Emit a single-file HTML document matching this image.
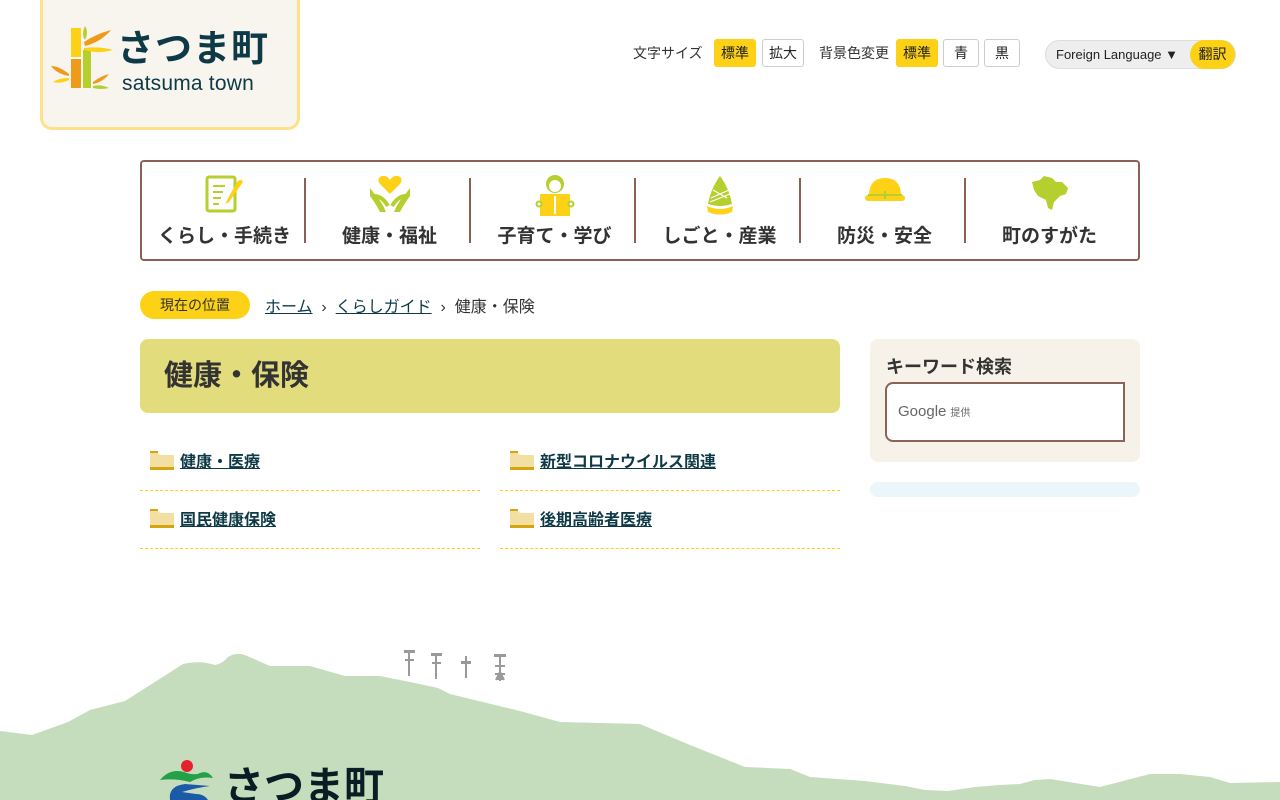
<!DOCTYPE html>
<html lang="ja"><head><meta charset="utf-8">
<style>
*{box-sizing:border-box;margin:0;padding:0}
html,body{width:1280px;height:800px;overflow:hidden;background:#fff;font-family:"Liberation Sans","Noto Sans CJK JP",sans-serif;color:#333}
.logo{position:absolute;left:40px;top:-10px;width:260px;height:140px;background:#f8f4ee;border:3px solid #fde28a;border-top:none;border-radius:0 0 12px 12px}
.logo .t1{position:absolute;left:74px;top:40px;font-size:37px;font-weight:bold;color:#0e3a48;letter-spacing:1px;line-height:1}
.logo .t2{position:absolute;left:79px;top:83px;font-size:21px;color:#0e3a48;line-height:1;letter-spacing:.2px}
.tools{position:absolute;top:39px;font-size:14px;color:#333;line-height:28px}
.btn{position:absolute;top:39px;height:28px;border:1px solid #ccc;border-radius:3px;font-size:14px;line-height:26px;text-align:center;background:#fff;color:#222}
.btn.on{background:#fcd116;border-color:#fcd116}
.lang{position:absolute;left:1045px;top:40px;width:191px;height:29px;border:1px solid #ddd;border-radius:15px;background:#eee;font-size:13px;line-height:27px;padding-left:10px;color:#222}
.lang b{position:absolute;right:0;top:-1px;width:45px;height:29px;border-radius:15px;background:#fcd116;font-weight:normal;font-size:14px;text-align:center;line-height:29px}
.nav{position:absolute;left:140px;top:160px;width:1000px;height:101px;border:2px solid #8b5e57;border-radius:4px}
.nav .it{position:absolute;top:0;width:165px;height:97px;text-align:center}
.nav .it span{position:absolute;left:0;right:0;top:59px;font-size:19px;font-weight:bold;color:#333}
.nav .sep{position:absolute;top:16px;width:2px;height:65px;background:#8b5e57}
.nav svg{position:absolute;left:50%;top:12px;transform:translateX(-50%)}
.crumb{position:absolute;top:291px;left:140px;height:28px}
.crumb .pill{position:absolute;left:0;top:0;width:110px;height:28px;border-radius:14px;background:#fcd116;font-size:14px;line-height:28px;text-align:center;color:#333}
.crumb .c{position:absolute;top:2px;font-size:16px;white-space:nowrap;color:#333}
.crumb a{color:#0e3a48;text-decoration:underline}
.h1{position:absolute;left:140px;top:339px;width:700px;height:74px;background:#e3dc7d;border-radius:8px;font-size:29px;font-weight:bold;line-height:74px;padding-left:24px;color:#333}
.li{position:absolute;width:340px;height:58px;border-bottom:1px dashed #fcd116}
.li svg{position:absolute;left:10px;top:18px}
.li a{position:absolute;left:40px;top:15px;font-size:16px;font-weight:bold;color:#0e3a48;text-decoration:underline}
.side{position:absolute;left:870px;top:339px;width:270px;height:123px;background:#f6f1e9;border-radius:8px}
.side h2{position:absolute;left:16px;top:14px;font-size:18px;font-weight:bold;color:#333}
.side .box{position:absolute;left:15px;top:43px;width:240px;height:60px;background:#fff;border:2px solid #8b6457;border-radius:8px 0 0 8px}
.side .g{position:absolute;left:11px;top:19px;font-size:15px;color:#666}
.side .g small{font-size:10px;margin-left:4px}
.blue{position:absolute;left:870px;top:482px;width:270px;height:15px;background:#ebf6fa;border-radius:8px}
</style></head><body>

<div class="logo">
 <svg style="position:absolute;left:8px;top:36px" width="62" height="64" viewBox="0 0 62 64">
  <rect x="20" y="2" width="10" height="30" fill="#fcd116"/>
  <rect x="20" y="32" width="10" height="30" fill="#ee9b1c"/>
  <rect x="32" y="24" width="8" height="38" fill="#b5cf2e"/>
  <rect x="20" y="31" width="10" height="2" fill="#fff"/>
  <path d="M33 16 Q45 8 60 4 Q50 16 34 20Z" fill="#ee9b1c"/>
  <path d="M33 22 Q48 20 62 24 Q48 28 33 24Z" fill="#fcd116"/>
  <path d="M34 14 Q38 6 34 0 Q30 8 34 14Z" fill="#b5cf2e"/>
  <path d="M18 48 Q8 40 0 40 Q6 48 18 50Z" fill="#ee9b1c"/>
  <path d="M18 52 Q8 52 2 56 Q10 58 18 54Z" fill="#fcd116"/>
  <path d="M42 56 Q50 50 58 48 Q52 56 42 58Z" fill="#ee9b1c"/>
  <path d="M42 60 Q50 58 58 62 Q50 64 42 62Z" fill="#b5cf2e"/>
 </svg>
 <div class="t1">さつま町</div>
 <div class="t2">satsuma town</div>
</div>

<div class="tools" style="left:633px">文字サイズ</div>
<div class="btn on" style="left:714px;width:42px">標準</div>
<div class="btn" style="left:762px;width:42px">拡大</div>
<div class="tools" style="left:819px">背景色変更</div>
<div class="btn on" style="left:896px;width:42px">標準</div>
<div class="btn" style="left:943px;width:36px">青</div>
<div class="btn" style="left:984px;width:36px">黒</div>
<div class="lang">Foreign Language ▼<b>翻訳</b></div>

<div class="nav">
 <div class="it" style="left:0"><svg width="44" height="40" viewBox="0 0 44 40"><rect x="4" y="3" width="28" height="34" rx="2" fill="none" stroke="#b5cf2e" stroke-width="3"/><path d="M10 12h12M10 18h10M10 24h8M10 30h6" stroke="#b5cf2e" stroke-width="2"/><path d="M22 30 L34 8 Q38 4 40 8 L26 28Z" fill="#fcd116"/></svg><span>くらし・手続き</span></div>
 <div class="sep" style="left:162px"></div>
 <div class="it" style="left:165px"><svg width="44" height="40" viewBox="0 0 44 40"><path d="M22 20 L12 10 Q8 4 14 2 Q19 1 22 6 Q25 1 30 2 Q36 4 32 10Z" fill="#fcd116"/><path d="M2 14 L8 22 Q14 28 18 38 L12 38 Q8 30 2 22Z M42 14 L36 22 Q30 28 26 38 L32 38 Q36 30 42 22Z" fill="#b5cf2e"/><path d="M6 22 Q14 22 20 32 M38 22 Q30 22 24 32" stroke="#b5cf2e" stroke-width="4" fill="none"/></svg><span>健康・福祉</span></div>
 <div class="sep" style="left:327px"></div>
 <div class="it" style="left:330px"><svg width="40" height="44" viewBox="0 0 40 44"><circle cx="20" cy="10" r="9" fill="#b5cf2e"/><circle cx="20" cy="12" r="6" fill="#fff"/><rect x="5" y="20" width="30" height="22" fill="#fcd116"/><path d="M20 22v18" stroke="#fff" stroke-width="2"/><circle cx="4" cy="30" r="2.5" fill="#fff" stroke="#b5cf2e" stroke-width="2"/><circle cx="36" cy="30" r="2.5" fill="#fff" stroke="#b5cf2e" stroke-width="2"/></svg><span>子育て・学び</span></div>
 <div class="sep" style="left:492px"></div>
 <div class="it" style="left:495px"><svg width="30" height="42" viewBox="0 0 30 42"><path d="M15 2 Q6 14 3 30 Q15 34 27 30 Q24 14 15 2Z" fill="#b5cf2e"/><path d="M8 16 L22 24 M6 24 L24 16 M5 28 L25 20" stroke="#fff" stroke-width="1.2"/><path d="M2 32 Q15 38 28 32 L27 38 Q15 43 3 38Z" fill="#fcd116"/></svg><span>しごと・産業</span></div>
 <div class="sep" style="left:657px"></div>
 <div class="it" style="left:660px"><svg width="42" height="32" viewBox="0 0 42 32"><path d="M5 22 Q5 4 21 4 Q37 4 37 22Z" fill="#fcd116"/><rect x="1" y="21" width="40" height="6" rx="3" fill="#fcd116"/><path d="M4 21h34 M21 17v8" stroke="#b5cf2e" stroke-width="2"/></svg><span>防災・安全</span></div>
 <div class="sep" style="left:822px"></div>
 <div class="it" style="left:825px"><svg width="40" height="36" viewBox="0 0 40 36"><path d="M2 8 L10 6 L14 2 L22 4 L26 8 L32 8 L38 14 L36 20 L30 22 L24 28 L22 36 L18 34 L16 26 L8 22 L4 16Z" fill="#b5cf2e"/></svg><span>町のすがた</span></div>
</div>

<div class="crumb">
 <div class="pill">現在の位置</div>
 <div class="c" style="left:125px"><a>ホーム</a> &nbsp;›&nbsp; <a>くらしガイド</a> &nbsp;›&nbsp; 健康・保険</div>
</div>

<div class="h1">健康・保険</div>

<div class="li" style="left:140px;top:433px"><svg width="24" height="20" viewBox="0 0 24 20"><path d="M0 2h8l2 2h14v14H0Z" fill="#f3dfa2"/><path d="M0 0h8v2H0Z M0 16h24v3H0Z" fill="#d4a50f"/></svg><a>健康・医療</a></div>
<div class="li" style="left:500px;top:433px"><svg width="24" height="20" viewBox="0 0 24 20"><path d="M0 2h8l2 2h14v14H0Z" fill="#f3dfa2"/><path d="M0 0h8v2H0Z M0 16h24v3H0Z" fill="#d4a50f"/></svg><a>新型コロナウイルス関連</a></div>
<div class="li" style="left:140px;top:491px"><svg width="24" height="20" viewBox="0 0 24 20"><path d="M0 2h8l2 2h14v14H0Z" fill="#f3dfa2"/><path d="M0 0h8v2H0Z M0 16h24v3H0Z" fill="#d4a50f"/></svg><a>国民健康保険</a></div>
<div class="li" style="left:500px;top:491px"><svg width="24" height="20" viewBox="0 0 24 20"><path d="M0 2h8l2 2h14v14H0Z" fill="#f3dfa2"/><path d="M0 0h8v2H0Z M0 16h24v3H0Z" fill="#d4a50f"/></svg><a>後期高齢者医療</a></div>

<div class="side"><h2>キーワード検索</h2><div class="box"><div class="g">Google<small>提供</small></div></div></div>
<div class="blue"></div>

<svg style="position:absolute;left:0;top:640px" width="1280" height="160" viewBox="0 640 1280 160">
 <path d="M0 731 L32 735 L68 722 L90 710 L125 701 L183 664 Q200 660 215 665 Q222 664 228 657 Q236 652 245 655 L270 666 L310 666 L345 676 L380 676 L410 682 L438 688 L450 694 L520 711 L560 722 L640 724 L690 745 L745 767 L790 769 L810 777 L865 781 L905 786 L925 790 L948 791 L975 787 L1000 785 L1020 784 L1035 780 L1050 779 L1100 787 L1150 774 L1180 774 L1210 777 L1230 783 L1280 782 L1280 800 L0 800Z" fill="#c6ddbd"/>
 <g stroke="#999" stroke-width="2" fill="#999">
  <path d="M409 650v26 M436 653v26 M466 656v22 M500 655v26 M496 680l4-8l4 8"/>
  <rect x="404" y="650" width="11" height="3" stroke="none"/><rect x="405" y="659" width="9" height="2" stroke="none"/>
  <rect x="431" y="653" width="11" height="3" stroke="none"/><rect x="432" y="662" width="9" height="2" stroke="none"/>
  <rect x="461" y="661" width="10" height="3" stroke="none"/>
  <rect x="494" y="654" width="12" height="3" stroke="none"/><rect x="495" y="665" width="10" height="2" stroke="none"/><rect x="495" y="673" width="10" height="2" stroke="none"/>
 </g>
 <circle cx="187" cy="766" r="6" fill="#e5222b"/>
 <path d="M160 780 Q170 768 184 772 Q195 776 200 773 Q208 770 213 778 Q200 776 190 782 Q175 778 160 780Z" fill="#24a046"/>
 <path d="M170 800 Q168 786 185 784 L210 786 Q195 788 182 792 L196 794 Q204 794 208 800Z" fill="#1b5aa6"/>
 <text x="224" y="800" font-family="Liberation Sans, Noto Sans CJK JP, sans-serif" font-size="40" font-weight="bold" fill="#0b1d24">さつま町</text>
</svg>
</body></html>
